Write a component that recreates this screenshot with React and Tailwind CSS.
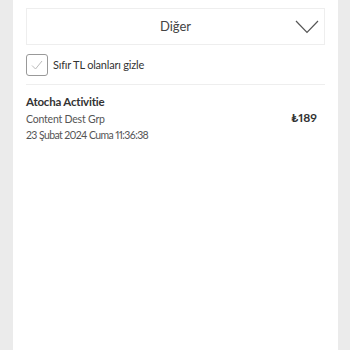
export default function App() {
  return (
    <div className="min-h-[350px] bg-[#ebebeb] flex justify-center font-['Lato',sans-serif]">
      <div className="w-[325px] ml-[1px] bg-white min-h-[350px] px-[13px] pt-[8px]">
        {/* Filter dropdown */}
        <button
          type="button"
          className="w-full h-[37px] border border-[#eeeeee] flex items-center relative"
        >
          <span className="flex-1 text-center text-[13px] text-[#444]">Diğer</span>
          <svg
            className="absolute right-[5px] top-[11px]"
            width="24"
            height="14"
            viewBox="0 0 24 14"
            fill="none"
          >
            <path d="M1 1 L12 12.5 L23 1" stroke="#555" strokeWidth="1.2" />
          </svg>
        </button>

        {/* Hide zero */}
        <label className="flex items-center gap-[5px] mt-[9px] pb-[8px] border-b border-[#eeeeee]">
          <span className="w-[22px] h-[22px] border border-[#999] rounded-[3px] flex items-center justify-center">
            <svg width="12" height="10" viewBox="0 0 12 10" fill="none">
              <path d="M1 5.5 L4.5 9 L11 1" stroke="#bbb" strokeWidth="1" />
            </svg>
          </span>
          <span className="text-[11px] text-[#333] tracking-[-0.2px]">Sıfır TL olanları gizle</span>
        </label>

        {/* Transaction */}
        <div className="flex items-center pt-[8px]">
          <div className="flex-1">
            <div className="text-[11.5px] font-bold text-[#333] leading-[17px] tracking-[-0.2px]">Atocha Activitie</div>
            <div className="text-[10.5px] text-[#555] leading-[16px] mt-[1px] tracking-[-0.2px]">Content Dest Grp</div>
            <div className="text-[10.5px] text-[#555] leading-[16px] proportional-nums tracking-[-0.6px]">
              23 Şubat 2024 Cuma 11:36:38
            </div>
          </div>
          <div className="text-[12px] font-bold text-[#333] pr-[8px] proportional-nums">₺189</div>
        </div>
      </div>
    </div>
  );
}
